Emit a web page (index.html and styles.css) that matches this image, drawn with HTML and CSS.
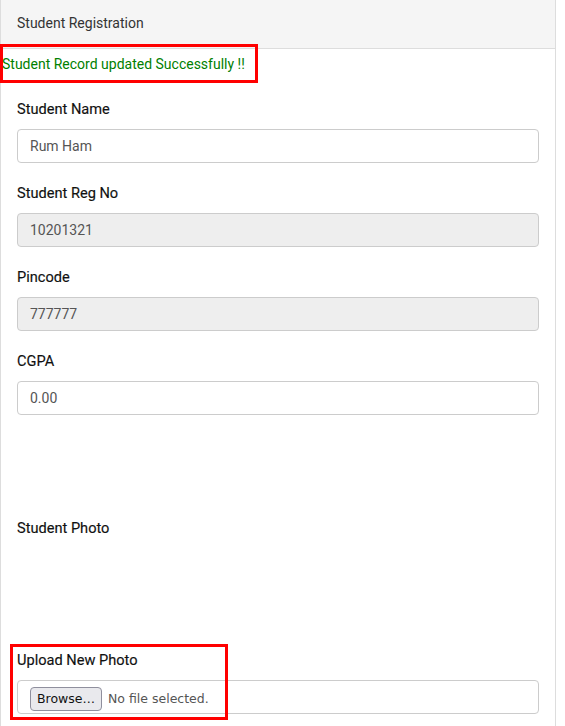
FILE: index.html
```html
<!DOCTYPE html>
<html lang="en">
<head>
<meta charset="utf-8">
<title>Student Registration</title>
<link rel="stylesheet" href="styles.css">
</head>
<body>
<div class="page">
  <div class="card">
    <div class="card-header">Student Registration</div>
    <div class="card-body">
      <div class="msg">Student Record updated Successfully !!</div>
      <form class="form">
        <div class="group">
          <label class="label">Student Name</label>
          <div class="control">Rum Ham</div>
        </div>
        <div class="group">
          <label class="label">Student Reg No</label>
          <div class="control disabled">10201321</div>
        </div>
        <div class="group">
          <label class="label">Pincode</label>
          <div class="control disabled">777777</div>
        </div>
        <div class="group">
          <label class="label">CGPA</label>
          <div class="control">0.00</div>
        </div>
        <div class="spacer-a"></div>
        <div class="group">
          <label class="label">Student Photo</label>
          <div class="photo"></div>
        </div>
        <div class="group">
          <label class="label">Upload New Photo</label>
          <div class="control file">
            <span class="browse">Browse…</span>
            <span class="nofile">No file selected.</span>
          </div>
        </div>
      </form>
    </div>
  </div>
  <div class="mark mark-msg"></div>
  <div class="mark mark-upload"></div>
</div>
</body>
</html>
```
FILE: styles.css
```css
html, body {
  margin: 0;
  padding: 0;
  background: #fff;
}
.page {
  position: relative;
  font-family: Roboto, "Liberation Sans", Arial, sans-serif;
  font-size: 14px;
  line-height: 20px;
  color: #333;
}
.card {
  width: 556px;
  box-sizing: border-box;
  border-left: 1px solid #ddd;
  border-right: 1px solid #ddd;
}
.card-header {
  background: #f5f5f5;
  border-bottom: 1px solid #ddd;
  padding: 13px 16px 15px;
  color: #333;
}
.card-body {
  padding: 5px 0 0;
}
.msg {
  color: #008000;
  padding-left: 1px;
}
.form {
  padding: 25px 16px 20px;
}
.group {
  margin-bottom: 20px;
}
.label {
  display: block;
  font-size: 14.6px;
  font-weight: 400;
  color: #111;
  margin-bottom: 10px;
  -webkit-text-stroke: 0.15px #111;
}
.control {
  box-sizing: border-box;
  height: 34px;
  padding: 6px 12px;
  border: 1px solid #ccc;
  border-radius: 4px;
  color: #555;
  background: #fff;
}
.control.disabled {
  background: #eee;
}
.control.file {
  display: flex;
  align-items: flex-start;
}
.browse {
  box-sizing: border-box;
  height: 24px;
  width: 72px;
  flex: none;
  display: flex;
  align-items: center;
  justify-content: center;
  background: #e9e9ed;
  border: 1px solid #8f8f9d;
  border-radius: 4px;
  color: #111;
  font-family: "DejaVu Sans", sans-serif;
  font-size: 12.5px;
}
.nofile {
  margin-left: 6px;
  line-height: 24px;
  font-family: "DejaVu Sans", sans-serif;
  font-size: 12.5px;
  color: #555;
}
.spacer-a {
  height: 83px;
}
.photo {
  height: 82px;
}
.mark {
  position: absolute;
  box-sizing: border-box;
  border: 3px solid #ff0000;
}
.mark-msg {
  left: 0;
  top: 44px;
  width: 258px;
  height: 39px;
}
.mark-upload {
  left: 10px;
  top: 644px;
  width: 218px;
  height: 76px;
}
```
